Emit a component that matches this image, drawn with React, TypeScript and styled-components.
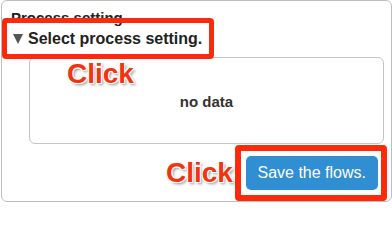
import React from "react";
import styled, { createGlobalStyle } from "styled-components";

const GlobalStyle = createGlobalStyle`
  html, body {
    margin: 0;
    padding: 0;
    background: #ffffff;
  }
  body {
    font-family: "Liberation Sans", Arial, Helvetica, sans-serif;
    color: #222222;
  }
`;

const Screen = styled.div`
  position: relative;
  width: 392px;
  height: 202px;
  overflow: hidden;
`;

const Panel = styled.section`
  box-sizing: border-box;
  display: flex;
  flex-direction: column;
  margin-left: 1px;
  width: 391px;
  height: 202px;
  padding: 8px 7px 0 9px;
  border: 1px solid #bdbdbd;
  border-radius: 6px;
`;

const Heading = styled.h3`
  margin: 0;
  font-size: 15px;
  line-height: 18px;
  font-weight: bold;
  color: #222222;
`;

const Details = styled.div`
  display: flex;
  flex-direction: column;
  gap: 9px;
  margin-top: 2px;
`;

const Summary = styled.div`
  display: flex;
  align-items: center;
  gap: 5px;
  padding-left: 2px;
  font-size: 16px;
  line-height: 19px;
  font-weight: bold;
  color: #222222;
`;

const Marker = styled.span`
  width: 0;
  height: 0;
  border-left: 5.5px solid transparent;
  border-right: 5.5px solid transparent;
  border-top: 10px solid #555555;
`;

const FlowBox = styled.div`
  box-sizing: border-box;
  display: flex;
  justify-content: center;
  align-items: flex-start;
  height: 87px;
  margin-left: 18px;
  padding-top: 35px;
  border: 1px solid #c4c4c4;
  border-radius: 6px;
  font-size: 15px;
  line-height: 18px;
  font-weight: bold;
  color: #333333;
`;

const Actions = styled.div`
  display: flex;
  justify-content: flex-end;
  margin-top: 12px;
  padding-right: 6px;
`;

const SaveButton = styled.button`
  height: 34px;
  padding: 0 12px;
  border: none;
  border-radius: 5px;
  background: #308ed2;
  color: #ffffff;
  font-family: "Liberation Sans", Arial, Helvetica, sans-serif;
  font-size: 16px;
  line-height: 18px;
  cursor: pointer;
`;

/* red annotation frames drawn over the screenshot */
const Highlight = styled.div<{ $left: number; $top: number; $w: number; $h: number; $thick: number }>`
  position: absolute;
  box-sizing: border-box;
  left: ${(p) => p.$left}px;
  top: ${(p) => p.$top}px;
  width: ${(p) => p.$w}px;
  height: ${(p) => p.$h}px;
  border: ${(p) => p.$thick}px solid #fb2a0a;
  border-radius: 4px;
  pointer-events: none;
`;

const ClickLabel = styled.span<{ $left: number; $top: number }>`
  position: absolute;
  left: ${(p) => p.$left}px;
  top: ${(p) => p.$top}px;
  font-family: "Liberation Sans", Arial, Helvetica, sans-serif;
  font-size: 28px;
  line-height: 28px;
  font-weight: bold;
  color: #f2330f;
  text-shadow: 1px 1px 0 #fff, -1px -1px 0 #fff, 1px -1px 0 #fff, -1px 1px 0 #fff,
    2px 2px 3px rgba(0, 0, 0, 0.45);
  pointer-events: none;
`;

export default function App() {
  return (
    <>
      <GlobalStyle />
      <Screen>
        <Panel>
          <Heading>Process setting</Heading>
          <Details>
            <Summary>
              <Marker />
              Select process setting.
            </Summary>
            <FlowBox>no data</FlowBox>
          </Details>
          <Actions>
            <SaveButton type="button">Save the flows.</SaveButton>
          </Actions>
        </Panel>
        <Highlight $left={2} $top={18} $w={212} $h={41} $thick={5} />
        <Highlight $left={235} $top={145} $w={152} $h={56} $thick={6} />
        <ClickLabel $left={67} $top={60}>Click</ClickLabel>
        <ClickLabel $left={166} $top={159}>Click</ClickLabel>
      </Screen>
    </>
  );
}
